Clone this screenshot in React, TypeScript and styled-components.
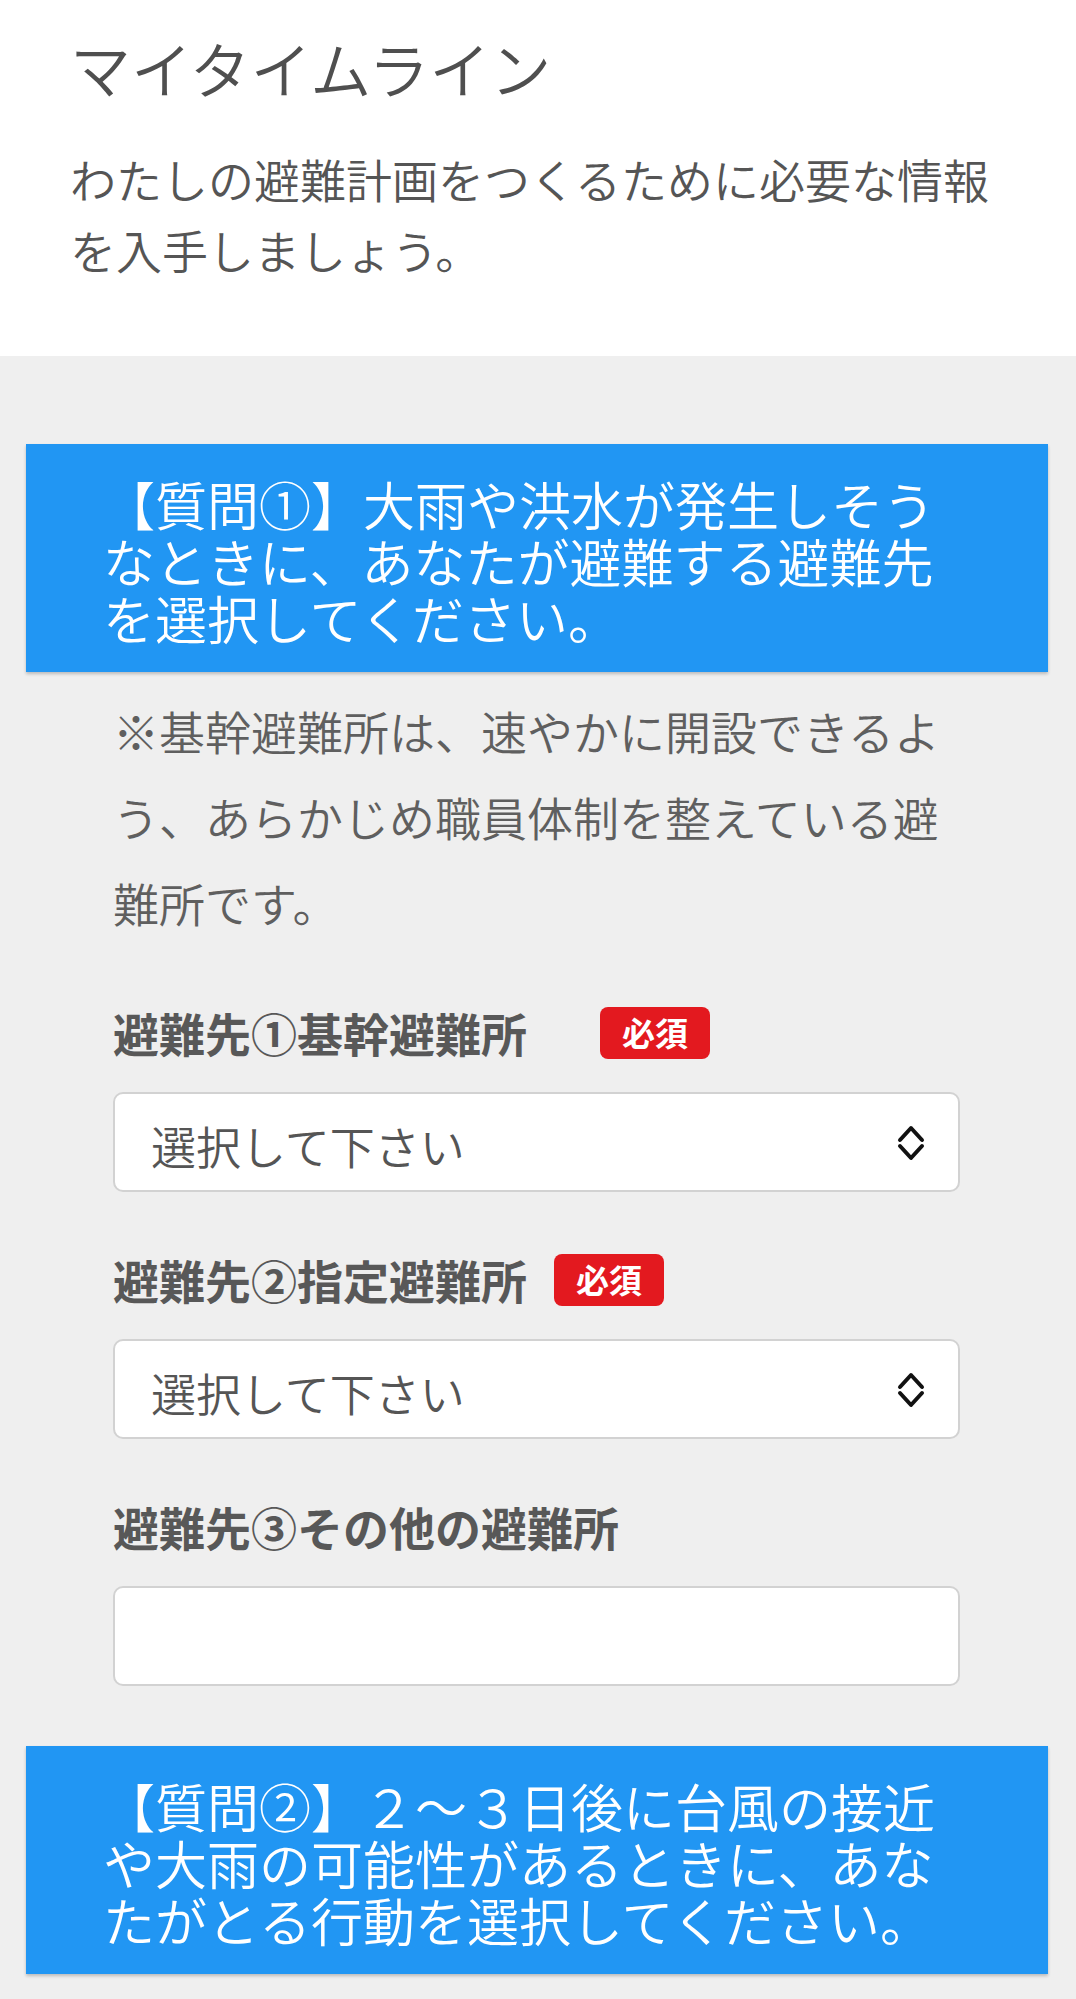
import React from 'react'
import styled, { createGlobalStyle } from 'styled-components'

const GlobalStyle = createGlobalStyle`
  html, body {
    margin: 0;
    padding: 0;
    background: #efefef;
  }
  body {
    font-family: 'Noto Sans CJK JP', 'Noto Sans', sans-serif;
    color: #555;
  }
  * {
    box-sizing: border-box;
  }
`

export default function App() {
  return (
    <>
      <GlobalStyle />
      <Page>
        <Header>
          <Title>マイタイムライン</Title>
          <Lead>わたしの避難計画をつくるために必要な情報を入手しましょう。</Lead>
        </Header>

        <Main>
          <Question>【質問①】大雨や洪水が発生しそうなときに、あなたが避難する避難先を選択してください。</Question>

          <Section>
            <Note>※基幹避難所は、速やかに開設できるよう、あらかじめ職員体制を整えている避難所です。</Note>

            <Field>
              <LabelRow>
                <Label>避難先①基幹避難所　</Label>
                <Required>必須</Required>
              </LabelRow>
              <SelectBox>
                <Select defaultValue=''>
                  <option value=''>選択して下さい</option>
                </Select>
                <Chevrons />
              </SelectBox>
            </Field>

            <Field>
              <LabelRow>
                <Label>避難先②指定避難所</Label>
                <Required>必須</Required>
              </LabelRow>
              <SelectBox>
                <Select defaultValue=''>
                  <option value=''>選択して下さい</option>
                </Select>
                <Chevrons />
              </SelectBox>
            </Field>

            <Field>
              <LabelRow>
                <Label>避難先③その他の避難所</Label>
              </LabelRow>
              <TextInput type='text' />
            </Field>
          </Section>

          <Question $gap>【質問②】２～３日後に台風の接近や大雨の可能性があるときに、あなたがとる行動を選択してください。</Question>
        </Main>
      </Page>
    </>
  )
}

function Chevrons() {
  return (
    <ChevronIcon width='28' height='38' viewBox='0 0 28 38' fill='none'>
      <polyline points='3,16 14,4 25,16' stroke='#111' strokeWidth='4' strokeLinecap='round' strokeLinejoin='round' />
      <polyline points='3,22 14,34 25,22' stroke='#111' strokeWidth='4' strokeLinecap='round' strokeLinejoin='round' />
    </ChevronIcon>
  )
}

const Page = styled.div`
  width: 1076px;
  min-height: 1999px;
  background: #efefef;
`

const Header = styled.header`
  background: #fff;
  padding: 32px 70px 71px 70px;
`

const Title = styled.h1`
  margin: 0;
  font-size: 61px;
  line-height: 72px;
  font-weight: 350;
  color: #4f4f4f;
`

const Lead = styled.p`
  margin: 39px 0 0;
  font-size: 46px;
  line-height: 71px;
  font-weight: 350;
  color: #555;
`

const Main = styled.main`
  padding: 88px 0 23px;
`

const Question = styled.h2<{ $gap?: boolean }>`
  margin: ${p => (p.$gap ? '60px' : '0')} 28px 0 26px;
  padding: 31px 90px 26px 77px;
  background: #2196f3;
  color: #fff;
  font-size: 52px;
  line-height: 57px;
  font-weight: 350;
  box-shadow: 0 2px 3px rgba(0, 0, 0, 0.22);
`

const Section = styled.section`
  padding: 15px 116px 0 113px;
`

const Note = styled.p`
  margin: 0;
  font-size: 46px;
  line-height: 86px;
  font-weight: 350;
  color: #5f5f5f;
`

const Field = styled.div`
  margin-top: 53px;
`

const LabelRow = styled.div`
  display: flex;
  align-items: center;
  margin-bottom: 25px;
`

const Label = styled.span`
  font-size: 46px;
  line-height: 69px;
  font-weight: 700;
  color: #585858;
  white-space: pre;
`

const Required = styled.span`
  margin-left: 27px;
  height: 52px;
  padding: 0 22px;
  display: inline-flex;
  align-items: center;
  background: #e3191f;
  color: #fff;
  border-radius: 8px;
  font-size: 33px;
  font-weight: 700;
  line-height: 1;
`

const SelectBox = styled.div`
  position: relative;
`

const Select = styled.select`
  appearance: none;
  -webkit-appearance: none;
  width: 100%;
  height: 100px;
  padding: 6px 80px 0 36px;
  border: 2px solid #d2d2d2;
  border-radius: 10px;
  background: #fff;
  font-family: inherit;
  font-size: 45px;
  font-weight: 350;
  color: #555;
  outline: none;
`

const ChevronIcon = styled.svg`
  position: absolute;
  right: 35px;
  top: 32px;
  pointer-events: none;
`

const TextInput = styled.input`
  display: block;
  width: 100%;
  height: 100px;
  padding: 0 36px;
  border: 2px solid #d2d2d2;
  border-radius: 10px;
  background: #fff;
  font-family: inherit;
  font-size: 45px;
  outline: none;
`
